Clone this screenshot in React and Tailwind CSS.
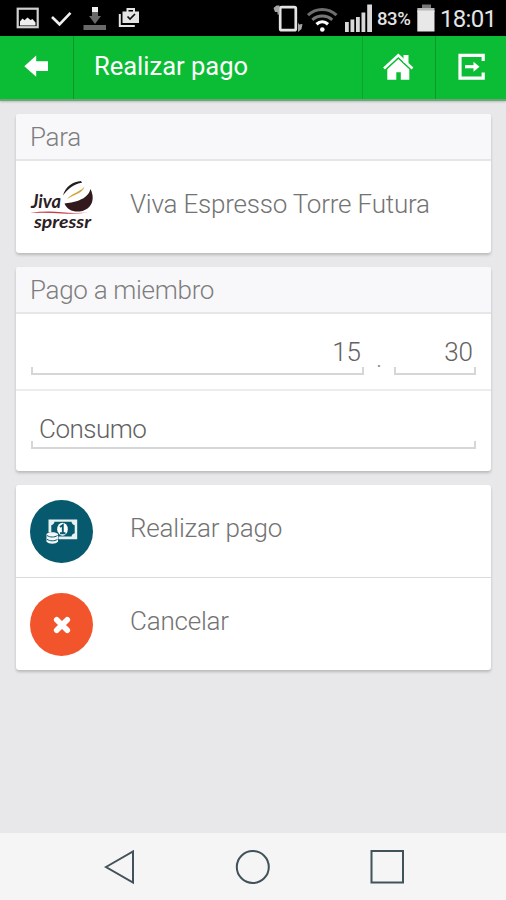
import React from 'react';

function StatusBar() {
  return (
    <div className="h-9 bg-black flex items-center justify-between text-[#e4e4e4] shrink-0">
      <div className="flex items-center h-full">
        <svg className="w-[140px] h-9" viewBox="0 0 140 36" fill="none">
          {/* picture */}
          <rect x="17.7" y="8.700" width="20" height="18.5" stroke="#d0d0d0" strokeWidth="2.2" />
          <path d="M20 25.5v-4l2.5-3 2 1.7 3-2.7 3 2.5 2-1 3 3.5v3z" fill="#efefef" />
          {/* check */}
          <path d="M52 17l7.5 7.3L70.500 12.800" stroke="#efefef" strokeWidth="2.6" />
          {/* download */}
          <path d="M92 7h6v5h-6z" fill="#f0f0f0" />
          <path d="M92 12h6v4h3l-6 8-6-8h3z" fill="#696969" />
          <path d="M83.500 25h22.500v5H83.500z" fill="#696969" />
          {/* briefcase with check */}
          <path d="M119.800 14v12h15" stroke="#e4e4e4" strokeWidth="2" />
          <path d="M122.500 11.500H139V23h-16.500z" fill="#e4e4e4" />
          <path d="M127.500 12V9h6.500v3" stroke="#e4e4e4" strokeWidth="2" />
          <path d="M127.500 16.500l2.500 2.500 5-5" stroke="#111" strokeWidth="1.700" />
        </svg>
      </div>
      <div className="flex items-center h-full pr-[9px]">
        <svg className="w-[103px] h-9" viewBox="272 0 103 36" fill="none">
          {/* vibrate / rotate */}
          <rect x="280.200" y="7.200" width="15.600" height="23" rx="1.500" stroke="#e4e4e4" strokeWidth="2.700" />
          <path d="M273.500 8l3-2.500h3v9h-2v-2.500h-2.500z" fill="#a5a5a5" />
          <path d="M298 22.500l1 2 3.500-.5-1 5-3.500 3z" fill="#a5a5a5" />
          {/* wifi */}
          <path d="M308 15.200c8-7.500 20.500-7.500 28.500 0" stroke="#6e6e6e" strokeWidth="3" />
          <path d="M312.300 19.800c5.700-5 14.200-5 19.900 0" stroke="#777" strokeWidth="3" />
          <path d="M316.500 24.200c3.400-3 8.100-3 11.500 0" stroke="#fff" strokeWidth="3.200" />
          <circle cx="322.300" cy="29.500" r="2.300" fill="#fff" />
          {/* signal */}
          <path
            d="M345 22h3.800v10H345zM350.500 19.500h3.800V32h-3.800zM356 17h3.800v15H356zM361.500 12.500h3.800V32h-3.800zM367.200 4.500h4.800V32h-4.800z"
            fill="#d9d9d9"
          />
        </svg>
        <span className="w-[42px] text-[18.500px] font-medium leading-9 pt-px pl-[2px] tracking-[-0.400px]">83%</span>
        <svg className="w-[18px] h-9" viewBox="0 0 18 36">
          <path d="M5 4.500h9V8H5z" fill="#777" />
          <path d="M.3 8h17.200v4H.3z" fill="#b8b8b8" />
          <path d="M.3 10.500h17.200v21H.3z" fill="#e8e8e8" />
        </svg>
        <span className="text-[24px] leading-9 pt-px ml-[5px] w-[57px] tracking-[-0.700px] whitespace-nowrap">18:01</span>
      </div>
    </div>
  );
}

function Header() {
  return (
    <header className="h-[65px] bg-[#0bbd34] border-b-2 border-[#6ba677] flex items-stretch shadow-[0_1px_2px_rgba(0,0,0,0.2)] shrink-0">
      <button className="w-[74px] border-r border-[#0a982c] flex justify-start pl-6 pt-[18px]">
        <svg className="w-6 h-6" viewBox="0 0 24 24" fill="#fff">
          <path d="M.3 12.200L12.200 1.500v5.700H24v9.800H12.200v5.700z" />
        </svg>
      </button>
      <h1 className="flex-1 pl-[20px] text-white text-[25.500px] leading-[60px] whitespace-nowrap">Realizar pago</h1>
      <button className="w-[73px] border-l border-[#0aa42f] flex justify-start pl-[20px] pt-4">
        <svg className="w-[31px] h-[29px]" viewBox="0 0 31 29" fill="none">
          <path d="M20.500 3h5v8h-5z" fill="#fff" />
          <path d="M1 16.500L15.300 3.200 29.500 16.500" stroke="#fff" strokeWidth="2.600" />
          <path d="M4.300 17.300l11-10.200 11 10.200v10.500h-8.500v-7.500h-4.500v7.500h-9z" fill="#fff" />
          <path d="M3.300 17.200L15.300 6.100l12 11.100" stroke="#0bbd34" strokeWidth=".8" />
        </svg>
      </button>
      <button className="w-[71px] border-l border-[#0a982c] flex justify-start pl-[22px] pt-[17px]">
        <svg className="w-[27px] h-[27px]" viewBox="0 0 27 27" fill="none" stroke="#fff" strokeWidth="3.200">
          <path d="M25.200 8V2.300H2v22.900h23.200v-5.700" />
          <path d="M7 13.700h10" />
          <path d="M15.500 8.700l6 5-6 5z" fill="#fff" stroke="none" />
        </svg>
      </button>
    </header>
  );
}

function Card({ title, children }) {
  return (
    <section className="bg-white rounded-[3px] shadow-[0_2px_3px_rgba(0,0,0,0.2)] overflow-hidden">
      {title && (
        <h2 className="h-[47px] bg-[#f8f8fb] border-b-2 border-[#e6e6e8] pl-[14px] text-[#7e7e7e] text-[26px] leading-[46px] tracking-[-0.300px]">
          {title}
        </h2>
      )}
      {children}
    </section>
  );
}

function Field({ value, className, barClass }) {
  return (
    <div className={className}>
      <div className="text-[26px] leading-9 px-[3px] text-[#626262]">{value}</div>
      <div className={`h-2 border-b-2 border-x-2 border-[#d5d6d7] ${barClass}`} />
    </div>
  );
}

function Logo() {
  return (
    <svg className="w-[63px] h-[63px]" viewBox="0 0 63 63">
      <g fontFamily="Lato, sans-serif" fontStyle="italic" fontWeight="700" fill="#2b2023">
        <text x="1" y="32" fontSize="18" textLength="30" lengthAdjust="spacingAndGlyphs">Jiva</text>
        <text x="4" y="52" fontSize="17" textLength="57" lengthAdjust="spacingAndGlyphs">spressr</text>
      </g>
      <path d="M0 37q16-2.500 32-.7t30-.8q-14 3-30 1.900t-32-.4z" fill="#c83c48" />
      {/* coffee bean */}
      <path d="M33 19.500c2-8.500 10-14 18-14.500l1 1.800c-8 1-14 6-19 12.700z" fill="#231d1e" />
      <path d="M37 23c5-6 14-7.500 17.500-12.500-1.500 6.500-10 8-17.500 12.500z" fill="#d1a83b" />
      <path d="M34.500 27.500c8-1 23-3 26-14.500 5 10 1.500 21-11 22.500-7 .6-12.500-2-15-8z" fill="#32191d" />
    </svg>
  );
}

function Row({ icon, label }) {
  return (
    <div className="flex items-center pl-[14px] h-[92px]">
      <div className="w-[64px] shrink-0">{icon}</div>
      <span className="pl-9 pb-[6px] text-[26px] leading-9 text-[#737373] tracking-[-0.200px] whitespace-nowrap">{label}</span>
    </div>
  );
}

function PayIcon() {
  return (
    <div className="w-[63px] h-[63px] rounded-full bg-[#075a6d] flex items-center justify-center">
      <svg className="w-8 h-[26px]" viewBox="0 0 32 26" fill="none">
        <path d="M2.500 1.500h28.700v19.800H2.500z" fill="#e7f0f2" />
        <path d="M8.500 3.800h17c.3 1.800 1.500 3.200 3.200 3.500v8c-1.700.3-2.900 1.500-3.200 3.300h-17c-.3-1.800-1.500-3-3.200-3.300v-8c1.700-.3 2.900-1.700 3.200-3.500z" fill="#075a6d" />
        <ellipse cx="16.500" cy="11.200" rx="5.300" ry="6.500" fill="#fff" />
        <path d="M14 9l2.800-2v8M14 15.300h5.500" stroke="#075a6d" strokeWidth="1.900" />
        <path d="M0 14.500h12.500v9c-2 3-10.500 3-12.500 0z" fill="#075a6d" />
        <path d="M.5 16c2-2.500 9.500-2.500 11.500 0v7.500c-2 3-9.500 3-11.500 0z" fill="#f2f6f7" />
        <path d="M1 17.500c3 2 7.500 2 10.500 0M1 21.300c3 2 7.500 2 10.500 0" stroke="#075a6d" strokeWidth="1" />
      </svg>
    </div>
  );
}

function CancelIcon() {
  return (
    <div className="w-[63px] h-[63px] rounded-full bg-[#f2552c] flex items-center justify-center">
      <svg className="w-[18px] h-[18px] mt-[2px]" viewBox="0 0 18 18" stroke="#fff" strokeWidth="5.600" strokeLinecap="round">
        <path d="M3.700 3.700l10.600 10.600M14.300 3.700L3.700 14.300" />
      </svg>
    </div>
  );
}

function NavBar() {
  return (
    <nav className="h-[67px] bg-[#f5f5f5] shrink-0">
      <svg className="w-full h-full" viewBox="0 0 506 67" fill="none" stroke="#41525a" strokeWidth="2">
        <path d="M106 34l27-15.500v31z" />
        <circle cx="252.800" cy="34" r="16" />
        <rect x="371.500" y="18" width="31.500" height="31.500" />
      </svg>
    </nav>
  );
}

function App() {
  return (
    <div className="w-[506px] h-[900px] flex flex-col bg-[#e8e8ea] font-['Roboto',sans-serif] overflow-hidden">
      <StatusBar />
      <Header />
      <main className="flex-1 pt-[13px] pl-4 pr-[15px] flex flex-col gap-[14px] font-light">
        <Card title="Para">
          <Row icon={<Logo />} label="Viva Espresso Torre Futura" />
        </Card>
        <Card title="Pago a miembro">
          <div className="h-[77px] border-b-2 border-[#ececee] px-[15px] pt-[20px] flex">
            <Field value="15" className="w-[333px] text-right" barClass="-mt-[3px]" />
            <span className="w-[30px] text-center text-[26px] leading-9 pt-[6px] text-[#8a8a8a]">.</span>
            <Field value="30" className="w-[82px] text-right" barClass="-mt-[3px]" />
          </div>
          <div className="h-[80px] px-[15px] pt-[20px]">
            <Field value="Consumo" className="w-full indent-[5px] tracking-[-0.500px]" barClass="-mt-[6px]" />
          </div>
        </Card>
        <Card>
          <Row icon={<PayIcon />} label="Realizar pago" />
          <div className="border-t border-[#dadadc]">
            <Row icon={<CancelIcon />} label="Cancelar" />
          </div>
        </Card>
      </main>
      <NavBar />
    </div>
  );
}

export default App;
